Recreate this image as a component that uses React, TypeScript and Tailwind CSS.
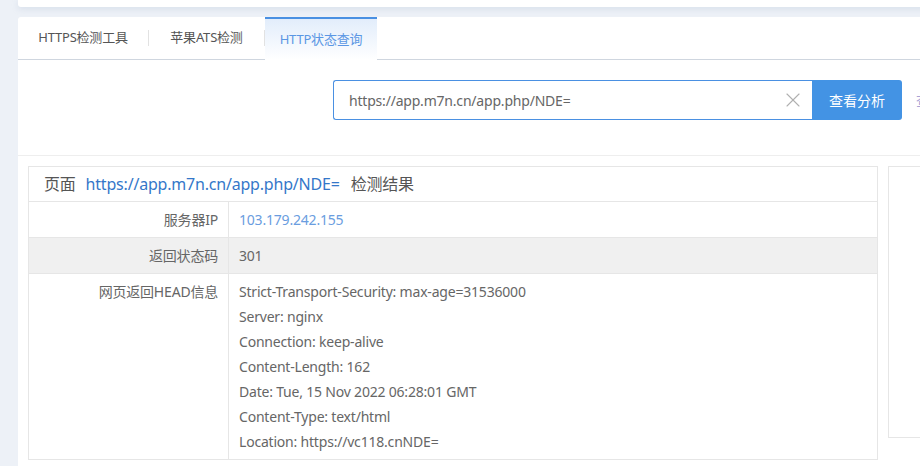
import { X } from "lucide-react";

const headers = [
  "Strict-Transport-Security: max-age=31536000",
  "Server: nginx",
  "Connection: keep-alive",
  "Content-Length: 162",
  "Date: Tue, 15 Nov 2022 06:28:01 GMT",
  "Content-Type: text/html",
  "Location: https://vc118.cnNDE=",
];

const font = { fontFamily: '"Noto Sans", "Noto Sans CJK SC", sans-serif' };

function Tabs() {
  return (
    <div className="flex h-[43px] items-stretch border-b border-[#cfd6df] text-[13px] tracking-[-0.2px]">
      <div className="flex w-[130px] items-center justify-center text-[#555]">HTTPS检测工具</div>
      <div className="my-[13px] w-px bg-[#e2e2e2]" />
      <div className="flex w-[115px] items-center justify-center text-[#555]">苹果ATS检测</div>
      <div className="my-[13px] w-px bg-[#e2e2e2]" />
      <div className="-mb-px flex w-[112px] items-center justify-center border-t-2 border-[#4a90e2] bg-gradient-to-b from-[#e2edfb] to-white text-[#5b97e4]">
        HTTP状态查询
      </div>
    </div>
  );
}

function SearchBar() {
  return (
    <div className="flex h-[96px] items-start border-b border-[#eeeeee] pl-[315px] pt-[20px]">
      <div className="flex h-10 w-[479px] items-center rounded-l-[3px] border border-r-0 border-[#4a90e2] pl-[15px] pr-[7px] text-[14px] tracking-[-0.2px] text-[#666]">
        <span className="flex-1">https://app.m7n.cn/app.php/NDE=</span>
        <X className="size-6 text-[#b0b0b0]" strokeWidth={1.1} />
      </div>
      <button className="h-10 w-[90px] rounded-r-[3px] bg-[#4393e4] text-[14px] text-white">查看分析</button>
      <span className="ml-[14px] whitespace-nowrap pt-[10px] text-[14px] text-[#a9a3d6]">查询历史记录</span>
    </div>
  );
}

function ResultTable() {
  return (
    <div className="w-[850px] shrink-0 border border-[#e6e6e6] text-[14px] tracking-[-0.2px]">
      <div className="flex h-[35px] items-center border-b border-[#e6e6e6] pl-[15px] text-[16px] text-[#555]">
        <span>页面</span>
        <span className="ml-[10px] text-[#3477c9]">https://app.m7n.cn/app.php/NDE=</span>
        <span className="ml-[11px]">检测结果</span>
      </div>
      <div className="flex h-[36px] border-b border-[#e6e6e6]">
        <div className="flex w-[200px] items-center justify-end border-r border-[#e6e6e6] pr-[10px] text-[#666]">服务器IP</div>
        <div className="flex items-center pl-[10px] text-[#6a9de0]">103.179.242.155</div>
      </div>
      <div className="flex h-[36px] border-b border-[#e6e6e6] bg-[#f0f0f0]">
        <div className="flex w-[200px] items-center justify-end border-r border-[#e6e6e6] pr-[10px] text-[#666]">返回状态码</div>
        <div className="flex items-center pl-[10px] text-[#666]">301</div>
      </div>
      <div className="flex">
        <div className="w-[200px] border-r border-[#e6e6e6] py-[5px] pr-[10px] text-right leading-[25px] text-[#666]">网页返回HEAD信息</div>
        <div className="py-[5px] pl-[10px] leading-[25px] text-[#666]">
          {headers.map((line) => (
            <div key={line}>{line}</div>
          ))}
        </div>
      </div>
    </div>
  );
}

export default function App() {
  return (
    <div className="h-[466px] w-[920px] overflow-hidden bg-[#edf1f7]" style={font}>
      <div className="pl-[18px]">
        <div className="h-[7px] w-[1000px] rounded-b-[3px] bg-white shadow-[0_2px_6px_rgba(150,170,200,0.25)]" />
        <div className="mt-[10px] w-[1000px] rounded-t-[3px] bg-white">
          <Tabs />
          <SearchBar />
          <div className="flex gap-[10px] p-[10px]">
            <ResultTable />
            <div className="h-[272px] w-[120px] shrink-0 border border-[#e6e6e6]" />
          </div>
        </div>
      </div>
    </div>
  );
}
